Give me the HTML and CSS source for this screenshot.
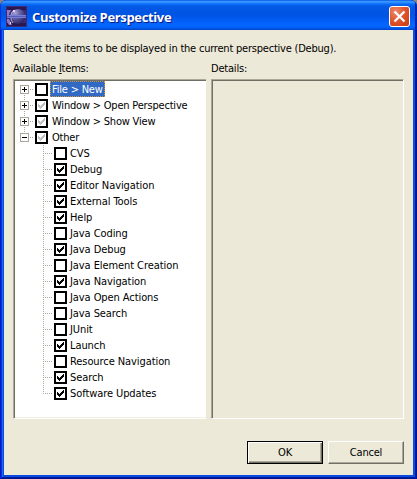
FILE: index.html
```html
<!DOCTYPE html>
<html lang="en">
<head>
<meta charset="utf-8">
<title>Customize Perspective</title>
<link rel="stylesheet" href="styles.css">
</head>
<body>
<svg width="0" height="0" class="defs">
  <symbol id="check" viewBox="0 0 9 9"><path d="M1 3h1v1h1v1h1v-1h1v-1h1v-1h1v-1h1v3h-1v1h-1v1h-1v1h-1v1h-1v-1h-1v-1h-1z"/></symbol>
</svg>
<div class="window">
  <header class="titlebar">
    <svg class="logo" width="21" height="21" viewBox="0 0 21 21">
      <defs>
        <radialGradient id="orb" cx=".3" cy=".25" r=".8"><stop offset="0" stop-color="#a9a6d6"/><stop offset=".4" stop-color="#6864a6"/><stop offset="1" stop-color="#2b2460"/></radialGradient>
      </defs>
      <path fill="#3d2a72" d="M0 0h21v21H0z"/>
      <path fill="#2a1750" d="M1 1h19v3H1zM1 17h19v3H1z"/>
      <path fill="#8f78c4" d="M1 4h4L3 8v3H1zM1 13h2l3 6H3l-2-3z"/>
      <circle cx="12" cy="10.500" r="7.500" fill="url(#orb)"/>
      <path fill="none" stroke="#b5a9e0" d="M8 4q-3 2-3.300 6.500Q5 15 7 17"/>
      <path fill="#7480dc" d="M1 9h19v1H1zM1 11h19v1H1z"/>
      <path fill="#5d5cb4" d="M1 10h19v1H1z"/>
      <path fill="#e2d8f2" d="M7 4h2v2H7zM4 16h1v2H4z"/>
    </svg>
    <h1>Customize Perspective</h1>
    <button class="close" aria-label="Close"><svg width="21" height="21" viewBox="0 0 21 21"><path d="M5.500 5.500l10 10M15.500 5.500l-10 10" stroke="#fff" stroke-width="2.300"/></svg></button>
  </header>
  <main class="content">
    <p class="intro">Select the items to be displayed in the current perspective (Debug).</p>
    <div class="columns">
      <section>
        <h2 class="avail">Available <u>I</u>tems:</h2>
        <div class="panel tree">
          <div class="row top"><i class="exp plus"></i><i class="dots"></i><i class="box"></i><span class="label selected">File &gt; New</span></div>
          <div class="row top"><i class="exp plus"></i><i class="dots"></i><i class="box gray"><svg><use href="#check"/></svg></i><span class="label">Window &gt; Open Perspective</span></div>
          <div class="row top"><i class="exp plus"></i><i class="dots"></i><i class="box gray"><svg><use href="#check"/></svg></i><span class="label">Window &gt; Show View</span></div>
          <div class="row top"><i class="exp"></i><i class="dots"></i><i class="box gray"><svg><use href="#check"/></svg></i><span class="label">Other</span></div>
          <div class="children">
            <div class="row"><i class="dots"></i><i class="box"></i><span class="label">CVS</span></div>
            <div class="row"><i class="dots"></i><i class="box"><svg><use href="#check"/></svg></i><span class="label">Debug</span></div>
            <div class="row"><i class="dots"></i><i class="box"><svg><use href="#check"/></svg></i><span class="label">Editor Navigation</span></div>
            <div class="row"><i class="dots"></i><i class="box"><svg><use href="#check"/></svg></i><span class="label">External Tools</span></div>
            <div class="row"><i class="dots"></i><i class="box"><svg><use href="#check"/></svg></i><span class="label">Help</span></div>
            <div class="row"><i class="dots"></i><i class="box"></i><span class="label">Java Coding</span></div>
            <div class="row"><i class="dots"></i><i class="box"><svg><use href="#check"/></svg></i><span class="label">Java Debug</span></div>
            <div class="row"><i class="dots"></i><i class="box"></i><span class="label">Java Element Creation</span></div>
            <div class="row"><i class="dots"></i><i class="box"><svg><use href="#check"/></svg></i><span class="label">Java Navigation</span></div>
            <div class="row"><i class="dots"></i><i class="box"></i><span class="label">Java Open Actions</span></div>
            <div class="row"><i class="dots"></i><i class="box"></i><span class="label">Java Search</span></div>
            <div class="row"><i class="dots"></i><i class="box"></i><span class="label">JUnit</span></div>
            <div class="row"><i class="dots"></i><i class="box"><svg><use href="#check"/></svg></i><span class="label">Launch</span></div>
            <div class="row"><i class="dots"></i><i class="box"></i><span class="label">Resource Navigation</span></div>
            <div class="row"><i class="dots"></i><i class="box"><svg><use href="#check"/></svg></i><span class="label">Search</span></div>
            <div class="row"><i class="dots"></i><i class="box"><svg><use href="#check"/></svg></i><span class="label">Software Updates</span></div>
          </div>
        </div>
      </section>
      <section>
        <h2>Details:</h2>
        <div class="panel"></div>
      </section>
    </div>
    <footer class="actions">
      <button class="btn default">OK</button>
      <button class="btn">Cancel</button>
    </footer>
  </main>
</div>
</body>
</html>
```
FILE: styles.css
```css
* { box-sizing: border-box; }
body {
  margin: 0;
  background: #848484;
  font: 11px/16px "DejaVu Sans Condensed", "DejaVu Sans", sans-serif;
  font-stretch: condensed;
  letter-spacing: -0.2px;
  color: #000;
}
.defs { position: absolute; }
.window {
  width: 417px;
  height: 479px;
  display: flex;
  flex-direction: column;
  padding: 0 4px 4px;
  border-radius: 7px 7px 0 0;
  overflow: hidden;
  background: #0b4be0;
  box-shadow: inset 1px 0 #0019cf, inset -1px 0 #00138c, inset 0 -1px #00138c, inset 2px 0 #0831d9, inset -2px 0 #001da0, inset 0 -2px #001da0, inset 3px 0 #166aee;
}
.titlebar {
  flex: none;
  height: 30px;
  margin: 0 -4px;
  padding: 1px 6px 0;
  display: flex;
  align-items: center;
  background: linear-gradient(#0058e6 0, #3a93ff 5%, #2a8fff 8%, #0a6bf5 14%, #0359e4 22%, #0054e3 45%, #0055e8 55%, #005df5 68%, #0466ff 82%, #0364fb 90%, #0050dc 97%, #003dc0 100%);
  box-shadow: inset 1px 0 #0831d9, inset -2px 0 #0026b0;
}
.logo { margin-top: 1px; }
h1 {
  flex: 1;
  margin: 2px 0 0 5px;
  font: bold 13px/20px "Open Sans", sans-serif;
  letter-spacing: -0.35px;
  color: #fff;
  text-shadow: 1px 1px #0a1883;
}
.close {
  width: 21px;
  height: 21px;
  margin-top: 2px;
  margin-right: 1px;
  padding: 0;
  border: 1px solid #fff;
  border-radius: 3px;
  background: radial-gradient(circle at 30% 25%, #ee8a6a, #e0552f 45%, #cb3a12);
}
.close svg { display: block; margin: -1px; }
.content { flex: 1; padding: 11px 9px 0; background: #ece9d8; }
.intro { margin: 0; line-height: 16px; white-space: nowrap; letter-spacing: -0.215px; }
.columns { display: flex; gap: 5px; }
section { width: 193px; }
h2 { margin: 4px 0 2px; font: inherit; }
.panel {
  height: 340px;
  border: 1px solid;
  border-color: #aca899 #fff #fff #aca899;
  box-shadow: inset 1px 1px #716f64;
}
.tree { padding: 1px 0 0 6px; background: #fff; border-right: 0; box-shadow: inset 1px 1px #716f64, inset 0 -1px #f1efe2; }
.row { height: 16px; display: flex; align-items: center; white-space: nowrap; }
.exp {
  width: 9px;
  height: 9px;
  border: 1px solid #aca899;
  background: linear-gradient(#000, #000) center / 5px 1px no-repeat;
}
.plus { background: linear-gradient(#000, #000) center / 5px 1px no-repeat, linear-gradient(#000, #000) center / 1px 5px no-repeat; }
.dots { width: 4px; height: 1px; margin: 0 1px; background: repeating-linear-gradient(90deg, #aca899 0 1px, transparent 1px 2px); }
.top { position: relative; }
.top:not(:first-child)::before {
  content: "";
  position: absolute;
  left: 4px;
  top: -4px;
  width: 1px;
  height: 8px;
  background: repeating-linear-gradient(#aca899 0 1px, transparent 1px 2px);
}
.box { width: 13px; height: 13px; flex: none; border: 2px solid #000; background: #fff; }
.box svg { display: block; width: 9px; height: 9px; shape-rendering: crispEdges; }
.gray svg { fill: #c0c0c0; }
.label { height: 16px; margin-left: 2px; padding: 0 2px; line-height: 18px; }
.selected {
  color: #fff;
  background: #316ac5;
  outline: 1px dotted #ce953a;
  outline-offset: -1px;
}
.children {
  padding-left: 23px;
  letter-spacing: -0.08px;
  background: repeating-linear-gradient(#aca899 0 1px, transparent 1px 2px) 23px 0 / 1px 249px no-repeat;
}
.children .dots { width: 10px; margin: 0 1px 0 0; }
.children .label { padding-left: 1px; }
.actions { display: flex; justify-content: flex-end; gap: 5px; margin-top: 22px; }
.btn {
  width: 76px;
  height: 23px;
  padding: 0;
  font: inherit;
  letter-spacing: inherit;
  color: #000;
  background: #ece9d8;
  border: 1px solid;
  border-color: #fff #716f64 #716f64 #fff;
  box-shadow: inset -1px -1px #aca899;
}
.default { border-color: #000; box-shadow: inset 1px 1px #fff, inset -1px -1px #716f64, inset -2px -2px #aca899; }
```
